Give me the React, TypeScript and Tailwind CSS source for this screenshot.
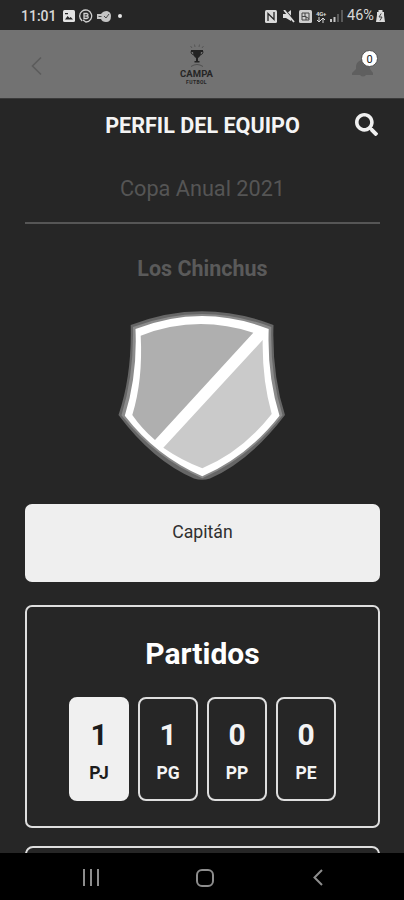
import { FaSearch } from 'react-icons/fa'

const matches = [
  { value: 1, label: 'PJ', active: true },
  { value: 1, label: 'PG', active: false },
  { value: 0, label: 'PP', active: false },
  { value: 0, label: 'PE', active: false },
]

function StatusBar() {
  return (
    <div className="flex h-[30px] shrink-0 items-center justify-between pl-[21px] pr-[19px] pt-[2px] text-[#d8d8d8]">
      <div className="flex items-center">
        <span className="w-[41px] text-[14px] font-medium leading-4">11:01</span>
        <svg className="ml-px" width="12" height="12" viewBox="0 0 12 12">
          <rect width="12" height="12" rx="1.5" fill="#e2e2e2" />
          <path d="M2 9.5 4.6 6l1.9 2 1.2-1 2.3 2.5zM2 3h3v1.3H2z" fill="#262626" />
        </svg>
        <svg className="ml-[4px]" width="14" height="14" viewBox="0 0 14 14" fill="none" stroke="#cfcfcf">
          <path d="M3.2 11.900A6 6 0 1 1 7 13l-3-2" strokeWidth="1.3" />
          <path d="M5 9.500V4.500h3q2 1.200 0 2.500 2.500 1 0 2.500z" strokeWidth="1.3" />
          <path d="M5 7h3" />
        </svg>
        <svg className="ml-[4px]" width="14" height="11" viewBox="0 0 14 11">
          <path d="M0 3h4q2-3 6-3 4 1 4 5 0 6-5 6-4 0-5-3H0z" fill="#c4c4c4" />
          <path d="m7 5 2 2 3-4M1.5 5.500h3" fill="none" stroke="#4a4a4a" />
        </svg>
        <span className="ml-[7px] size-[4px] rounded-full bg-[#e6e6e6]" />
      </div>
      <div className="flex items-center">
        <svg width="12" height="13" viewBox="0 0 12 13">
          <rect width="12" height="13" rx="1.5" fill="#d9d9d9" />
          <path d="M3 11V3.500l6 6V2" fill="none" stroke="#262626" strokeWidth="1.3" />
        </svg>
        <svg className="ml-[6px]" width="12" height="13" viewBox="0 0 12 13">
          <path d="M0 4h3l5-4v11L3 8H0z" fill="#dcdcdc" />
          <path d="m2 0 10 11" stroke="#262626" strokeWidth="1.2" />
          <path d="m1 0 10 12" stroke="#dcdcdc" strokeWidth="1.8" />
        </svg>
        <svg className="ml-[4px]" width="13" height="13" viewBox="0 0 13 13">
          <rect width="13" height="13" rx="1.5" fill="#cfcfcf" />
          <path d="M3 3h7v7H3zM3 6.5h4V10M6 3v3.5l4 2" fill="none" stroke="#444" />
        </svg>
        <div className="ml-[3px] flex w-[12px] flex-col items-center">
          <span className="text-[6px] font-bold leading-[7px] tracking-[-0.3px]">4G+</span>
          <svg width="10" height="6" viewBox="0 0 10 6" fill="none" stroke="#d8d8d8">
            <path d="M3 0v5M1 3l2 2 2-2M7 6V1M5 3l2-2 2 2" />
          </svg>
        </div>
        <svg className="ml-[3px]" width="13" height="12" viewBox="0 0 13 12">
          <path d="M0 9h2v3H0zM3.5 7h2v5h-2z" fill="#c4c4c4" />
          <path d="M7 4h2v8H7zM11 0h2v12h-2z" fill="#595959" />
        </svg>
        <span className="ml-[4px] w-[28px] whitespace-nowrap text-[14.5px] leading-4">46%</span>
        <svg className="ml-px" width="9" height="12" viewBox="0 0 9 12">
          <path d="M2.5 0h4v2H8v3l1 7H0l1-7V2h1.5z" fill="#dcdcdc" />
          <path d="M5.2 3.5 3 7h3l-2 3.5" fill="none" stroke="#444" />
        </svg>
      </div>
    </div>
  )
}

function Header() {
  return (
    <header className="flex h-[69px] shrink-0 items-center justify-between border-b border-[#3a3a3a] bg-[#727272] pl-[31px] pr-[27px]">
      <svg width="12" height="20" viewBox="0 0 12 20" fill="none" stroke="#5c5c5c" strokeWidth="1.6" className="mt-[3px]">
        <path d="M10 1.500 1.5 10l8.500 8.500" />
      </svg>
      <div className="mr-px flex w-[40px] flex-col items-center text-[#252525]">
        <svg width="18" height="24" viewBox="0 0 18 24">
          <path d="M5 6h8c0 5-1 7-3 8v3h1.500v1.500h-5V17H8v-3C6 13 5 11 5 6z" fill="#222" />
          <path d="M3 6.500h12M5 7.500H3c0 2 1 3 3 3.500M13 7.500h2c0 2-1 3-3 3.500" fill="none" stroke="#222" />
          <path d="M4 4 2.500 2M7 3 6.500.5M11 3l.5-2.500M14 4l1.500-2" stroke="#505050" strokeWidth=".8" />
          <path d="M3 22.500q6-4 12 0" fill="none" stroke="#505050" />
        </svg>
        <span className="text-[9.5px] font-bold leading-[11px] tracking-[0.1px]">CAMPA</span>
        <span className="text-[5px] font-bold leading-[6px] tracking-[0.4px]">FUTBOL</span>
      </div>
      <div className="relative h-[26px] w-[26px]">
        <svg width="22" height="17" viewBox="0 0 22 17" className="ml-px mt-[9px]">
          <path d="M0 13 4 9V7c0-4 3-7 7-7s7 3 7 7v2l3 4v2h-7q-3 3-6 0H0z" fill="#5f5f5f" />
        </svg>
        <span className="absolute -right-px top-[-1px] flex size-[17px] items-center justify-center rounded-full border border-[#505050] bg-white pt-[3px] text-[11px] text-[#222]">
          0
        </span>
      </div>
    </header>
  )
}

function Crest() {
  return (
    <svg width="168" height="170" viewBox="0 0 168 170" className="mr-[2px]">
      <path d="M12.700 15Q84 -12.500 155.500 15Q154 65 167 105Q132 151 92 168.500Q84 171 76 168.500Q35 151 .5 105Q14 65 12.700 15z" fill="#666" />
      <path d="M15 17Q84 -9 153.300 17Q152 65 164.500 105.300Q131 148 84.300 168.200Q37 148 3.500 105.300Q16 65 15 17z" fill="#8b8b8b" />
      <path d="M17.500 19Q84 -7 150.700 19Q149 65 161.500 105.700Q130 146 84.300 166.300Q38 146 6.800 105.700Q19.500 65 17.500 19z" fill="#fff" />
      <path d="M22.700 25.700Q78 4 135.300 22.700L37 130Q24 119 14.300 105Q25 70 22.700 25.700z" fill="#afafaf" />
      <path d="M144.700 30Q144 69 153.700 104Q124 142 84.300 158.300Q63 150 45.300 137.700z" fill="#cacaca" />
    </svg>
  )
}

export default function App() {
  return (
    <div className="flex h-[900px] w-[404px] flex-col overflow-hidden bg-[#262626] font-[Roboto,sans-serif]">
      <StatusBar />
      <Header />

      <main className="flex min-h-0 flex-1 flex-col overflow-hidden pl-[25px] pr-[24px]">
        <div className="grid h-[53px] shrink-0 grid-cols-[25px_1fr_25px] items-center pt-px">
          <h1 className="col-start-2 whitespace-nowrap text-center text-[21.6px] font-bold text-[#f4f4f4]">PERFIL DEL EQUIPO</h1>
          <FaSearch className="mb-[3px] size-[23px] text-[#f0f0f0]" />
        </div>

        <div className="flex h-[72px] shrink-0 items-center justify-center border-b-2 border-[#565656] pt-[5px]">
          <h2 className="text-[21.7px] text-[#555]">Copa Anual 2021</h2>
        </div>

        <h3 className="mt-[28px] h-[33px] shrink-0 text-center text-[21.5px] font-bold leading-[33px] text-[#5a5a5a]">Los Chinchus</h3>

        <div className="mt-[25px] flex shrink-0 justify-center">
          <Crest />
        </div>

        <div className="mt-[24px] h-[78px] shrink-0 rounded-[7px] bg-[#efefef] pt-[16px] text-center text-[17.7px] leading-6 text-[#303030]">
          Capitán
        </div>

        <section className="mt-[23px] h-[223px] shrink-0 rounded-[7px] border-2 border-[#dedede] pt-[29px]">
          <h3 className="text-center text-[30px] font-bold leading-[36px] text-white">Partidos</h3>
          <div className="mt-[25px] flex justify-center gap-[9px]">
            {matches.map((item) => (
              <div
                key={item.label}
                className={`flex h-[104px] w-[60px] flex-col items-center rounded-[8px] border-2 pt-[19px] ${
                  item.active ? 'border-[#f0f0f0] bg-[#f0f0f0] text-[#1c1c1c]' : 'border-[#dedede] text-[#f4f4f4]'
                }`}
              >
                <span className="text-[30px] font-bold leading-[34px]">{item.value}</span>
                <span className="mt-[10px] text-[17.5px] font-bold leading-[22px]">{item.label}</span>
              </div>
            ))}
          </div>
        </section>

        <section className="mt-[18px] h-[100px] shrink-0 rounded-[8px] border-2 border-[#dedede]" />
      </main>

      <nav className="flex h-[47px] shrink-0 items-center justify-between bg-black pl-[83px] pr-[81px] pt-[2px]">
        <svg width="16" height="17" viewBox="0 0 16 17" stroke="#8d8d8d" strokeWidth="2">
          <path d="M1 0v17M8 0v17M15 0v17" />
        </svg>
        <svg width="18" height="18" viewBox="0 0 18 18" fill="none" stroke="#8d8d8d" strokeWidth="2" className="mr-[3px]">
          <rect x="1" y="1" width="16" height="16" rx="5" />
        </svg>
        <svg width="10" height="17" viewBox="0 0 10 17" fill="none" stroke="#8d8d8d" strokeWidth="2">
          <path d="M9 1 1.500 8.500 9 16" />
        </svg>
      </nav>
    </div>
  )
}
